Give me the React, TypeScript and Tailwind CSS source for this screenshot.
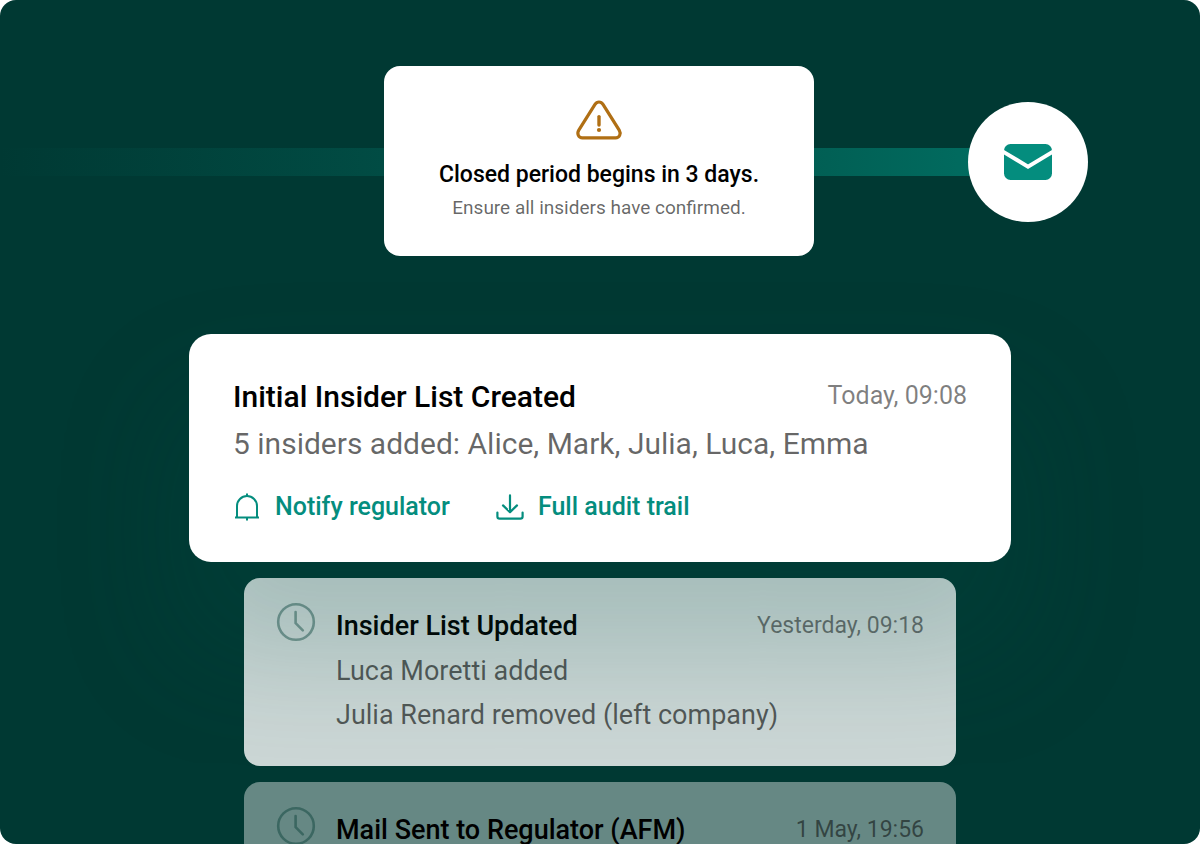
interface Entry {
  title: string;
  time: string;
  lines: string[];
  tone: string;
}

const entries: Entry[] = [
  {
    title: 'Insider List Updated',
    time: 'Yesterday, 09:18',
    lines: ['Luca Moretti added', 'Julia Renard removed (left company)'],
    tone: 'bg-white/80',
  },
  {
    title: 'Mail Sent to Regulator (AFM)',
    time: '1 May, 19:56',
    lines: [],
    tone: 'bg-white/40',
  },
];

function WarningIcon() {
  return (
    <svg className="w-12 h-12" viewBox="0 0 48 48" fill="none" stroke="#b06f14" strokeWidth="3.2" strokeLinecap="round" strokeLinejoin="round" aria-hidden="true">
      <path d="M20 7.4 3.8 33.2C1.6 36.8 3.6 40.8 7.4 40.8H40.6C44.4 40.8 46.4 36.8 44.2 33.2L28 7.4C26 4.2 22 4.2 20 7.4Z" />
      <path d="M24 19.6V28" strokeWidth="3.4" />
      <circle cx="24" cy="33" r="2.1" fill="#b06f14" stroke="none" />
    </svg>
  );
}

function MailIcon() {
  return (
    <svg className="w-12 h-9" viewBox="0 0 48 36" aria-hidden="true">
      <rect width="48" height="36" rx="6.5" fill="#048d7e" />
      <path d="M-1 7.6 24 22.6 49 7.6" fill="none" stroke="#fff" strokeWidth="4" />
    </svg>
  );
}

function BellIcon() {
  return (
    <svg className="w-7 h-7" viewBox="0 0 28 28" fill="none" stroke="#048d7e" strokeWidth="2" aria-hidden="true">
      <path d="M4 24.6V13a10 10 0 0 1 20 0V24.6" />
      <path d="M2 24.6H26M14 .4V3M14 24.6V27.6" />
    </svg>
  );
}

function DownloadIcon() {
  return (
    <svg className="w-7 h-7" viewBox="0 0 28 28" fill="none" stroke="#048d7e" strokeWidth="2.2" strokeLinecap="round" strokeLinejoin="round" aria-hidden="true">
      <path d="M14 2.4V19M7 12.4 14 19.2 21 12.4" />
      <path d="M1.4 19.6V23.4a2.2 2.2 0 0 0 2.2 2.2H24.4a2.2 2.2 0 0 0 2.2-2.2V19.6" />
    </svg>
  );
}

function ClockIcon() {
  return (
    <svg className="w-10 h-10 shrink-0" viewBox="0 0 40 40" fill="none" stroke="#003933" strokeOpacity="0.42" strokeWidth="2.6" strokeLinecap="round" strokeLinejoin="round" aria-hidden="true">
      <circle cx="20" cy="20" r="17.8" />
      <path d="M19.6 10V21.2L26.8 28.4" />
    </svg>
  );
}

function HistoryCard({ title, time, lines, tone }: Entry) {
  return (
    <li className={`flex gap-5 w-full max-w-[712px] h-[188px] shrink-0 rounded-2xl px-8 pt-6 ${tone}`}>
      <ClockIcon />
      <div className="flex-1 pt-1">
        <div className="flex justify-between items-center h-10 mb-[3px]">
          <h3 className="text-[27px] font-medium text-black">{title}</h3>
          <time className="text-[23px] text-black/50">{time}</time>
        </div>
        {lines.map((line) => (
          <p key={line} className="text-[27px] leading-[44px] text-black/60">{line}</p>
        ))}
      </div>
    </li>
  );
}

export default function App() {
  return (
    <main className="h-screen overflow-hidden rounded-2xl bg-[#003933] font-['Roboto','Liberation_Sans',sans-serif]">
      <section className="grid grid-cols-[1fr_430px_1fr] grid-rows-[192px] items-center pt-[66px] pr-0.5">
        <div className="h-7 bg-gradient-to-r from-[#003933] to-[#014c44]" />
        <div className="flex flex-col items-center self-start h-[190px] rounded-2xl bg-white pt-[31px]">
          <WarningIcon />
          <h1 className="mt-3 text-[23px] leading-9 font-medium text-black">Closed period begins in 3 days.</h1>
          <p className="text-[19px] leading-[30px] text-black/60">Ensure all insiders have confirmed.</p>
        </div>
        <div className="flex items-center pr-[110px]">
          <div className="h-7 flex-1 bg-gradient-to-r from-[#015f54] to-[#016b5f]" />
          <div className="flex items-center justify-center size-[120px] -ml-1 rounded-full bg-white">
            <MailIcon />
          </div>
        </div>
      </section>

      <section className="flex flex-col items-center mt-[76px]">
        <article className="relative z-10 w-full max-w-[822px] h-[228px] rounded-[22px] bg-white px-11 pt-10 shadow-[0_80px_120px_16px_rgba(0,80,71,0.19)]">
          <div className="flex justify-between items-center h-11">
            <h2 className="text-[30px] font-medium text-black">Initial Insider List Created</h2>
            <time className="text-[25px] text-black/50">Today, 09:08</time>
          </div>
          <p className="text-[30px] leading-[52px] text-black/60">5 insiders added: Alice, Mark, Julia, Luca, Emma</p>
          <div className="flex gap-[46px] mt-4 text-[25px] leading-[42px] font-medium text-[#048d7e]">
            <button type="button" className="flex items-center gap-3.5">
              <BellIcon />
              Notify regulator
            </button>
            <button type="button" className="flex items-center gap-3.5">
              <DownloadIcon />
              Full audit trail
            </button>
          </div>
        </article>

        <ul className="flex flex-col items-center gap-4 w-full mt-4">
          {entries.map((entry) => (
            <HistoryCard key={entry.title} {...entry} />
          ))}
        </ul>
      </section>
    </main>
  );
}
